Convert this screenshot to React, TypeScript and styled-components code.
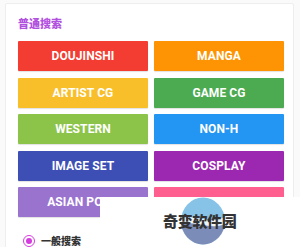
import React from 'react'
import styled, { createGlobalStyle } from 'styled-components'

const GlobalStyle = createGlobalStyle`
  html, body {
    margin: 0;
    padding: 0;
    background: #fafafa;
    font-family: Roboto, 'Noto Sans CJK SC', sans-serif;
  }
  #root {
    width: 300px;
    height: 247px;
    overflow: hidden;
    position: relative;
  }
`

const Card = styled.section`
  margin: 3px 6px 0 5px;
  padding: 12px 11px 20px 12px;
  background: #fff;
  border: 1px solid #eeeeee;
  border-radius: 2px;
`

const Title = styled.h2`
  margin: 0 0 11px 0;
  font-size: 11px;
  line-height: 14px;
  font-weight: 900;
  color: #b250e0;
  font-family: 'Noto Sans CJK SC', sans-serif;
`

const Grid = styled.div`
  display: grid;
  grid-template-columns: 130px 130px;
  column-gap: 6px;
  row-gap: 6.6px;
`

const CategoryButton = styled.button<{ color: string }>`
  height: 30px;
  border: none;
  border-radius: 1px;
  background: ${props => props.color};
  color: #fff;
  font-family: Roboto, sans-serif;
  font-weight: 700;
  font-size: 12px;
  letter-spacing: 0.1px;
  padding: 0;
  box-shadow: 0 1px 1px rgba(0, 0, 0, 0.12);
`

const RadioRow = styled.label`
  display: flex;
  align-items: center;
  gap: 6px;
  margin-top: 16px;
  padding-left: 5px;
  font-size: 10px;
  font-weight: 900;
  color: #333;
  font-family: 'Noto Sans CJK SC', sans-serif;
`

const RadioDot = styled.span`
  width: 10px;
  height: 10px;
  border-radius: 50%;
  border: 1.5px solid #d63bdf;
  display: flex;
  align-items: center;
  justify-content: center;
  &::after {
    content: '';
    width: 6px;
    height: 6px;
    border-radius: 50%;
    background: #d63bdf;
  }
`

const Watermark = styled.div`
  position: absolute;
  left: 100px;
  top: 197px;
  width: 200px;
  height: 50px;
  background: #fff;
`

const WatermarkLogo = styled.svg`
  position: absolute;
  left: 81px;
  top: 0;
`

const WatermarkText = styled.span`
  position: absolute;
  left: 63px;
  top: 15px;
  font-size: 15px;
  line-height: 18px;
  font-weight: 900;
  color: #333;
  letter-spacing: -0.3px;
  font-family: 'Noto Sans CJK SC', sans-serif;
`

const categories = [
  { label: 'DOUJINSHI', color: '#f33d32' },
  { label: 'MANGA', color: '#fe9404' },
  { label: 'ARTIST CG', color: '#f9bf2b' },
  { label: 'GAME CG', color: '#4caa50' },
  { label: 'WESTERN', color: '#8cc44a' },
  { label: 'NON-H', color: '#2395f2' },
  { label: 'IMAGE SET', color: '#3d4fb4' },
  { label: 'COSPLAY', color: '#9c27b0' },
  { label: 'ASIAN PORN', color: '#9a73cf' },
  { label: 'MISC', color: '#fe5f8f' },
]

const App: React.FC = () => {
  return (
    <>
      <GlobalStyle />
      <Card>
        <Title>普通搜索</Title>
        <Grid>
          {categories.map(_cat => (
            <CategoryButton key={_cat.label} color={_cat.color}>
              {_cat.label}
            </CategoryButton>
          ))}
        </Grid>
        <RadioRow>
          <RadioDot />
          一般搜索
        </RadioRow>
      </Card>
      <Watermark>
        <WatermarkLogo width="44" height="48" viewBox="0 0 44 48">
          <defs>
            <clipPath id="wm">
              <ellipse cx="22" cy="24" rx="22" ry="23.5" />
            </clipPath>
          </defs>
          <g clipPath="url(#wm)">
            <rect x="0" y="0" width="44" height="48" fill="#86c3e6" />
            <path d="M0 22 C12 16 26 28 44 20 L44 48 L0 48 Z" fill="#eef5fa" />
            <path d="M0 28 C14 22 28 34 44 27 L44 48 L0 48 Z" fill="#7b8cb8" />
          </g>
        </WatermarkLogo>
        <WatermarkText>奇变软件园</WatermarkText>
      </Watermark>
    </>
  )
}

export default App
